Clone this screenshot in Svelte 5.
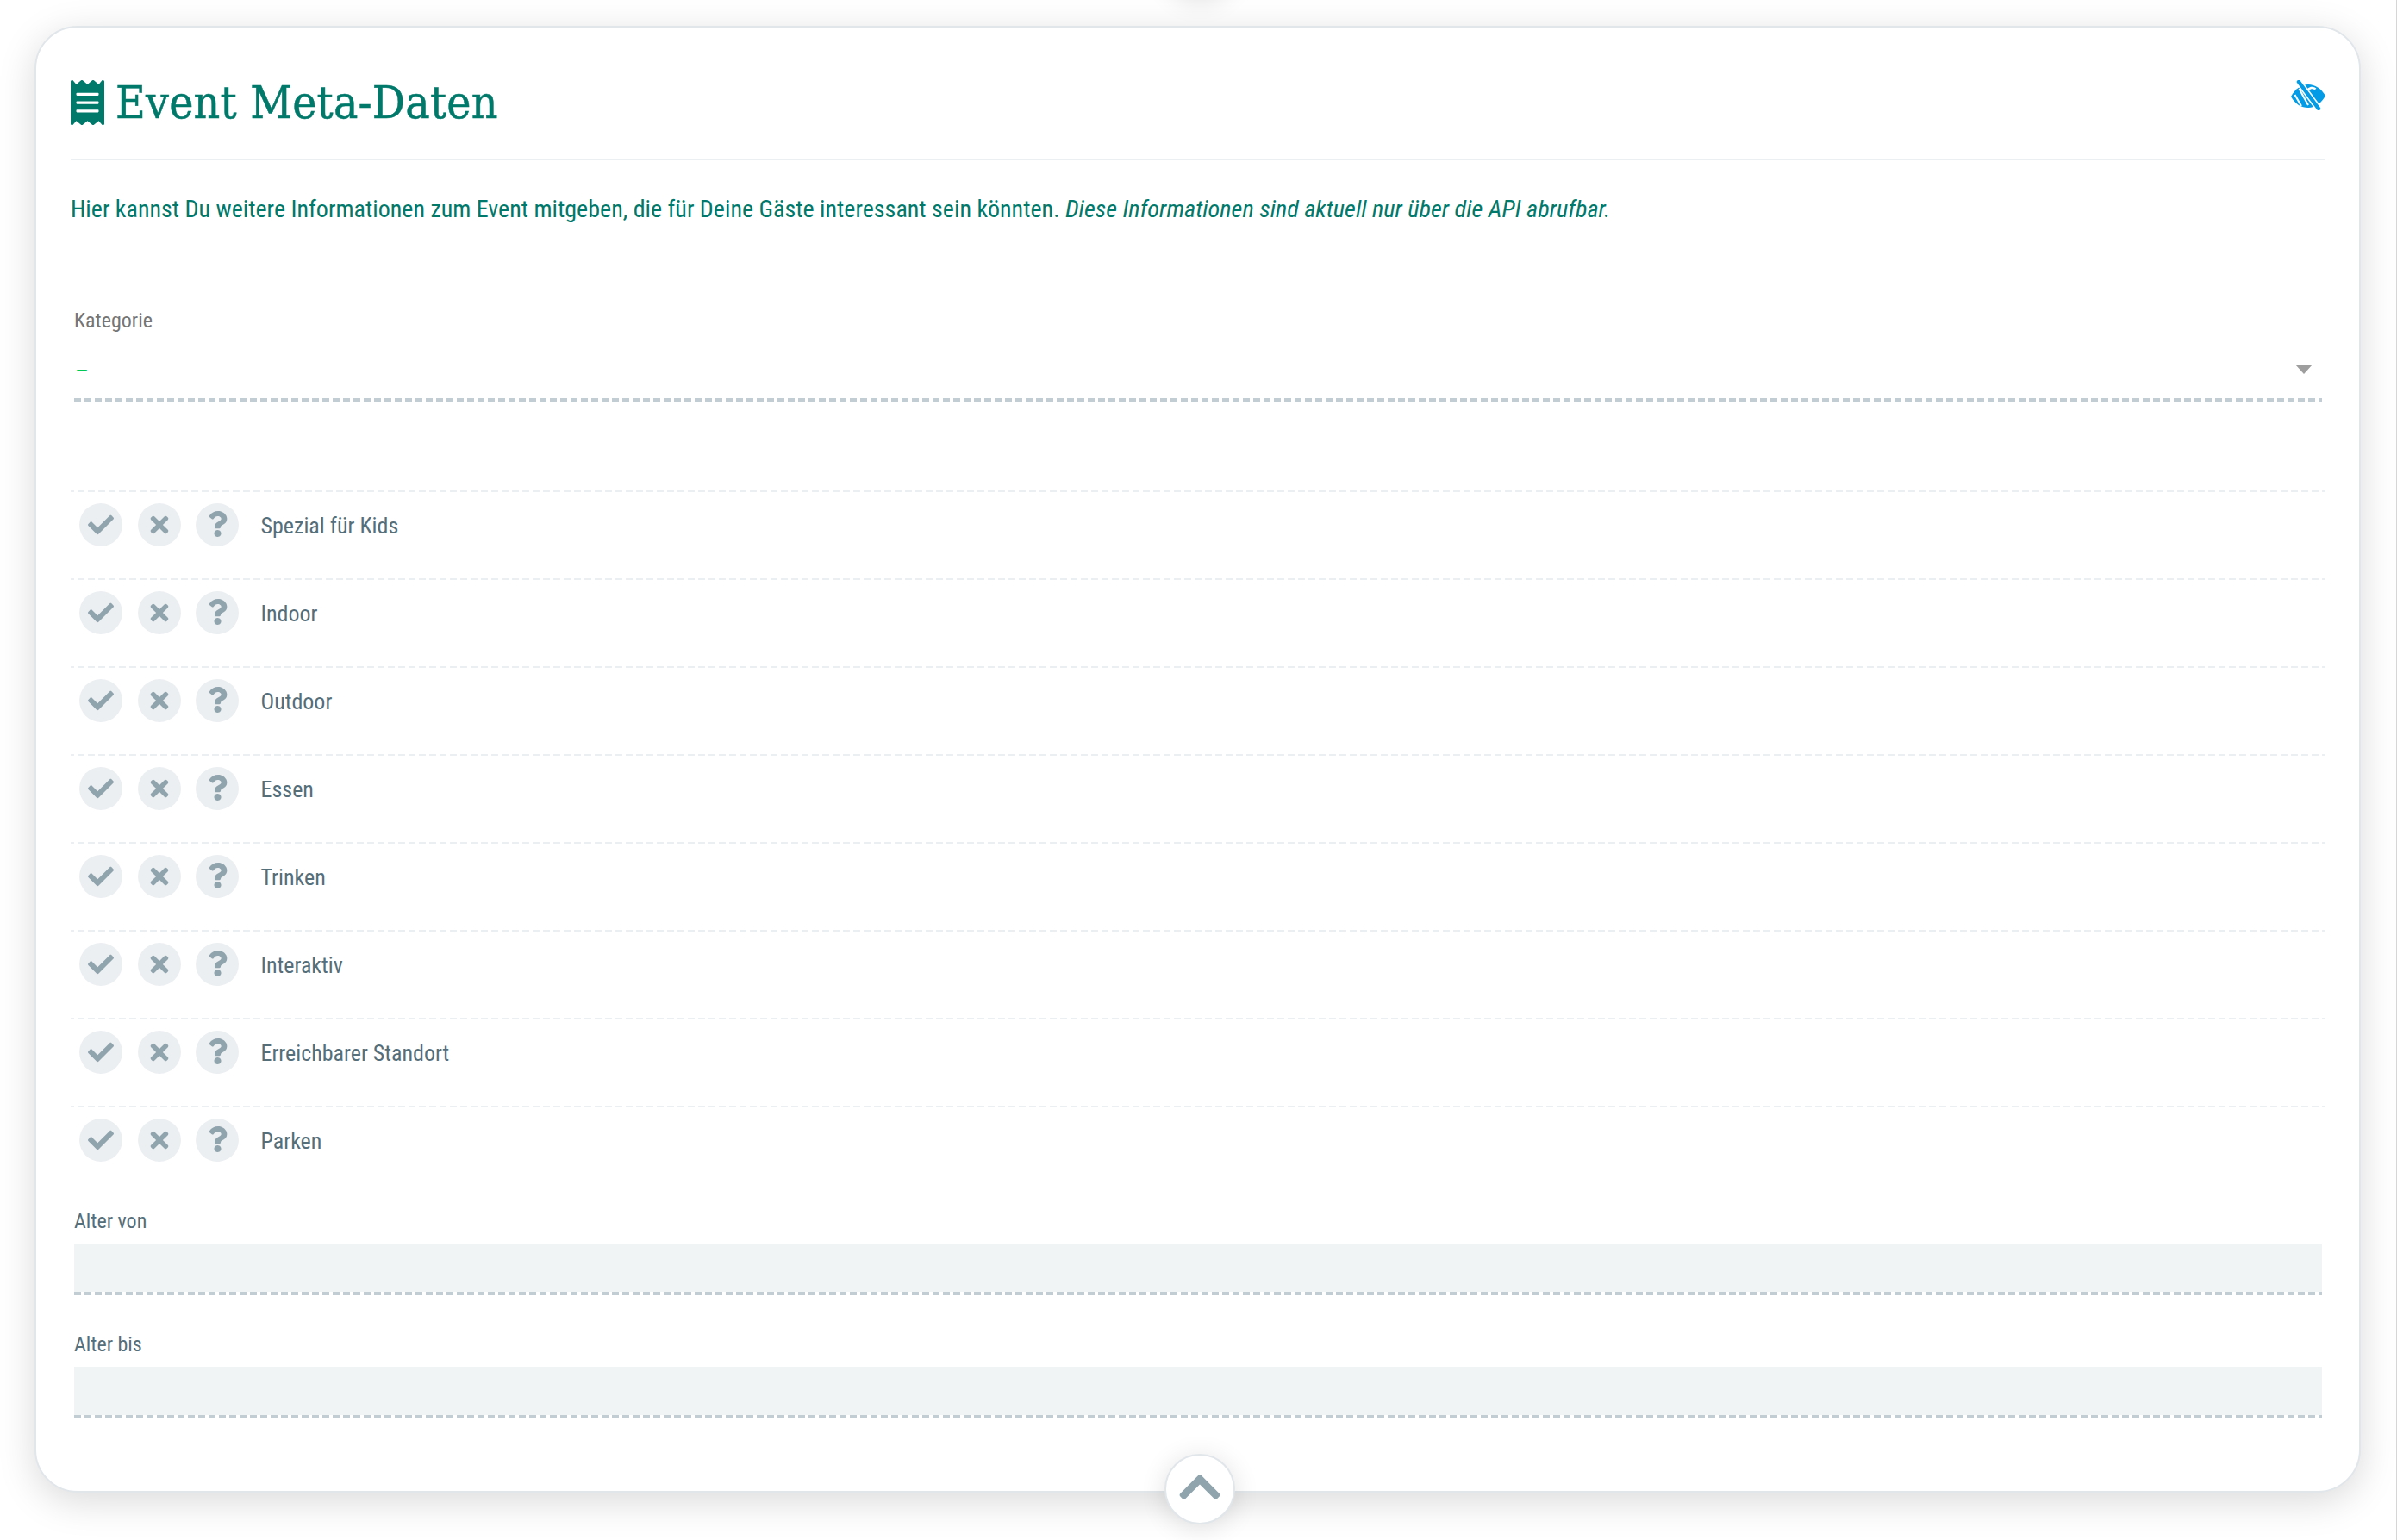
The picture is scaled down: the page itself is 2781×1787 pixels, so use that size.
<script>
  const rows = ['Spezial für Kids','Indoor','Outdoor','Essen','Trinken','Interaktiv','Erreichbarer Standort','Parken'];
</script>

<div class="page">
  <span class="prev-toggle"></span>
  <section class="card">
    <header class="head">
      <h2>
        <svg class="receipt" viewBox="0 0 384 512"><path d="M358.4 3.2L320 48 265.6 3.2a15.9 15.9 0 0 0-19.2 0L192 48 137.6 3.2a15.9 15.9 0 0 0-19.2 0L64 48 25.6 3.2C15-4.7 0 2.8 0 16v480c0 13.2 15 20.7 25.6 12.8L64 464l54.4 44.8a15.9 15.9 0 0 0 19.2 0L192 464l54.4 44.8a15.9 15.9 0 0 0 19.2 0L320 464l38.4 44.8c10.5 7.9 25.6.4 25.6-12.8V16c0-13.2-15-20.7-25.6-12.8zM320 360c0 4.4-3.6 8-8 8H72c-4.4 0-8-3.6-8-8v-16c0-4.4 3.6-8 8-8h240c4.4 0 8 3.6 8 8v16zm0-96c0 4.4-3.6 8-8 8H72c-4.4 0-8-3.6-8-8v-16c0-4.4 3.6-8 8-8h240c4.4 0 8 3.6 8 8v16zm0-96c0 4.4-3.6 8-8 8H72c-4.4 0-8-3.6-8-8v-16c0-4.4 3.6-8 8-8h240c4.4 0 8 3.6 8 8v16z"/></svg>
        <span>Event Meta-Daten</span>
      </h2>
      <svg class="eye" viewBox="0 0 40 35">
        <path class="eye-body" d="M0 19C5 10 12 5 20 5C28 5 35 10 40 18C35 27 28 32 20 32C12 32 5 28 0 19Z"/>
        <path class="eye-ring" d="M19 12.5A6 6 0 0 1 28.5 10.5"/>
        <path class="eye-stripe" d="M9.5 10L20 29M4.5 17L12 30"/>
        <path class="eye-gapline" d="M9 2L32 33"/>
        <path class="eye-slash" d="M9 2L32 33"/>
      </svg>
    </header>

    <p class="intro">Hier kannst Du weitere Informationen zum Event mitgeben, die für Deine Gäste interessant sein könnten. <em>Diese Informationen sind aktuell nur über die API abrufbar.</em></p>

    <div class="select">
      <span class="label grey">Kategorie</span>
      <div class="select-value">
        <span class="dash">–</span>
        <span class="caret"></span>
      </div>
      <div class="dashes"></div>
    </div>

    <ul class="rows">
      {#each rows as r}
        <li>
          <span class="btn"><svg class="i-check" viewBox="0 0 512 512"><path d="M173.898 439.404l-166.4-166.4c-9.997-9.997-9.997-26.206 0-36.204l36.203-36.204c9.997-9.998 26.207-9.998 36.204 0L192 312.69 432.095 72.596c9.997-9.997 26.207-9.997 36.204 0l36.203 36.204c9.997 9.997 9.997 26.206 0 36.204l-294.4 294.401c-9.998 9.997-26.207 9.997-36.204-.001z"/></svg></span>
          <span class="btn"><svg class="i-times" viewBox="0 0 352 512"><path d="M242.72 256l100.07-100.07c12.28-12.28 12.28-32.19 0-44.48l-22.24-22.24c-12.28-12.28-32.19-12.28-44.48 0L176 189.28 75.93 89.21c-12.28-12.28-32.19-12.28-44.48 0L9.21 111.45c-12.28 12.28-12.28 32.19 0 44.48L109.28 256 9.21 356.07c-12.28 12.28-12.28 32.19 0 44.48l22.24 22.24c12.28 12.28 32.2 12.28 44.48 0L176 322.72l100.07 100.07c12.28 12.28 32.2 12.28 44.48 0l22.24-22.24c12.28-12.28 12.28-32.19 0-44.48L242.72 256z"/></svg></span>
          <span class="btn"><svg class="i-q" viewBox="0 0 384 512"><path d="M202.021 0C122.202 0 70.503 32.703 29.914 91.026c-7.363 10.58-5.093 25.086 5.178 32.874l43.138 32.709c10.373 7.865 25.132 6.026 33.253-4.148 25.049-31.381 43.63-49.449 82.757-49.449 30.764 0 68.816 19.799 68.816 49.631 0 22.552-18.617 34.134-48.993 51.164-35.423 19.86-82.299 44.576-82.299 106.405V320c0 13.255 10.745 24 24 24h72.471c13.255 0 24-10.745 24-24v-5.773c0-42.86 125.268-44.645 125.268-160.627C377.504 66.256 286.902 0 202.021 0zM192 373.459c-38.196 0-69.271 31.075-69.271 69.271 0 38.195 31.075 69.27 69.271 69.27s69.271-31.075 69.271-69.271-31.075-69.27-69.271-69.27z"/></svg></span>
          <span class="row-label">{r}</span>
        </li>
      {/each}
    </ul>

    <div class="field first">
      <span class="label">Alter von</span>
      <div class="input"></div>
      <div class="dashes"></div>
    </div>
    <div class="field">
      <span class="label">Alter bis</span>
      <div class="input"></div>
      <div class="dashes"></div>
    </div>

    <button class="toggle" aria-label="Einklappen"><svg viewBox="0 0 448 512"><path d="M240.971 130.524l194.343 194.343c9.373 9.373 9.373 24.569 0 33.941l-22.667 22.667c-9.357 9.357-24.522 9.375-33.901.04L224 227.495 69.255 381.516c-9.379 9.335-24.544 9.317-33.901-.04l-22.667-22.667c-9.373-9.373-9.373-24.569 0-33.941L207.03 130.525c9.372-9.373 24.568-9.373 33.941-.001z"/></svg></button>
  </section>
</div>

<style>
  :global(html), :global(body) { margin: 0; background: #fff; }
  .page {
    position: relative;
    box-sizing: border-box;
    width: 2781px;
    height: 1787px;
    padding: 30px 41px 0 40px;
    border-right: 1px solid #d6d6d6;
    overflow: hidden;
    font-family: "Roboto", sans-serif;
    font-stretch: 75%;
  }
  .prev-toggle {
    position: absolute;
    left: 1351px;
    top: -84px;
    width: 82px;
    height: 82px;
    border-radius: 50%;
    box-shadow: 0 4px 30px rgba(0,0,0,.12);
  }
  .card {
    position: relative;
    box-sizing: border-box;
    height: 1702px;
    padding: 0 39px 0 40px;
    background: #fff;
    border: 2px solid #e1e6ea;
    border-radius: 50px;
    box-shadow: 0 10px 44px rgba(0,0,0,.15);
  }
  .head {
    display: flex;
    justify-content: space-between;
    align-items: flex-start;
    height: 154px;
    border-bottom: 2px solid #eceff1;
    box-sizing: border-box;
  }
  h2 {
    display: flex;
    align-items: center;
    gap: 13px;
    margin: 61px 0 0;
    color: #00796b;
    font-family: "DejaVu Serif", serif;
    font-stretch: condensed;
    font-weight: 400;
    font-size: 53px;
    line-height: 52px;
    letter-spacing: .2px;
    -webkit-text-stroke: .5px #00796b;
  }
  .receipt { width: 39px; height: 52px; fill: #00796b; }
  .eye { width: 40px; height: 35px; margin: 61px 0 0; }
  .eye-body { fill: #039be5; }
  .eye-ring { fill: none; stroke: #fff; stroke-width: 2.6; }
  .eye-stripe { fill: none; stroke: #fff; stroke-width: 2; }
  .eye-gapline { fill: none; stroke: #fff; stroke-width: 7.5; }
  .eye-slash { fill: none; stroke: #039be5; stroke-width: 4.5; stroke-linecap: round; }
  .intro {
    margin: 38px 0 0;
    font-size: 28px;
    line-height: 38px;
    color: #00796b;
  }
  .intro em { font-size: 28.25px; }
  .select { margin: 96px 4px 0; }
  .label {
    display: block;
    font-size: 24px;
    line-height: 28px;
    color: #546e7a;
  }
  .grey { color: #757575; }
  .select-value {
    box-sizing: border-box;
    height: 76px;
    padding-top: 8px;
    display: flex;
    align-items: center;
    justify-content: space-between;
  }
  .dash { color: #00c853; font-size: 28px; margin: 5px 0 0 1px; }
  .caret {
    width: 0; height: 0;
    margin-right: 11px;
    border-left: 10px solid transparent;
    border-right: 10px solid transparent;
    border-top: 11px solid #9e9e9e;
  }
  .dashes {
    height: 4px;
    background: repeating-linear-gradient(90deg, #c2cdd3 0 8px, transparent 8px 12px);
  }
  .rows {
    list-style: none;
    margin: 103px 0 0;
    padding: 0;
  }
  li {
    display: flex;
    align-items: center;
    height: 102px;
    box-sizing: border-box;
    padding: 0 0 22px 10px;
    background: repeating-linear-gradient(90deg, #eceff1 0 4px, transparent 4px 8px, #eceff1 8px 12px) top / 100% 2px no-repeat;
  }
  .btn {
    display: flex;
    align-items: center;
    justify-content: center;
    width: 50px;
    height: 50px;
    border-radius: 50%;
    background: #eceff1;
    margin-right: 17.5px;
  }
  .btn svg { fill: #90a4ae; }
  .i-check { width: 30px; height: 30px; }
  .i-times { width: 22px; height: 30px; }
  .i-q { width: 23px; height: 30px; margin-top: -2px; }
  .row-label {
    margin: 1px 0 0 8px;
    font-size: 26px;
    color: #546e7a;
  }
  .field { margin: 0 4px; padding-top: 43px; }
  .field.first { padding-top: 18px; }
  .input { height: 56px; margin-top: 12px; background: #f0f4f5; }
  .toggle {
    position: absolute;
    left: 1309px;
    bottom: -39px;
    width: 82px;
    height: 82px;
    padding: 0;
    display: flex;
    align-items: center;
    justify-content: center;
    background: #fff;
    border: 2px solid #e1e6ea;
    border-radius: 50%;
    box-shadow: 0 4px 30px rgba(0,0,0,.12);
  }
  .toggle svg { width: 48px; height: 55px; margin-top: -6px; fill: #90a4ae; }
</style>
